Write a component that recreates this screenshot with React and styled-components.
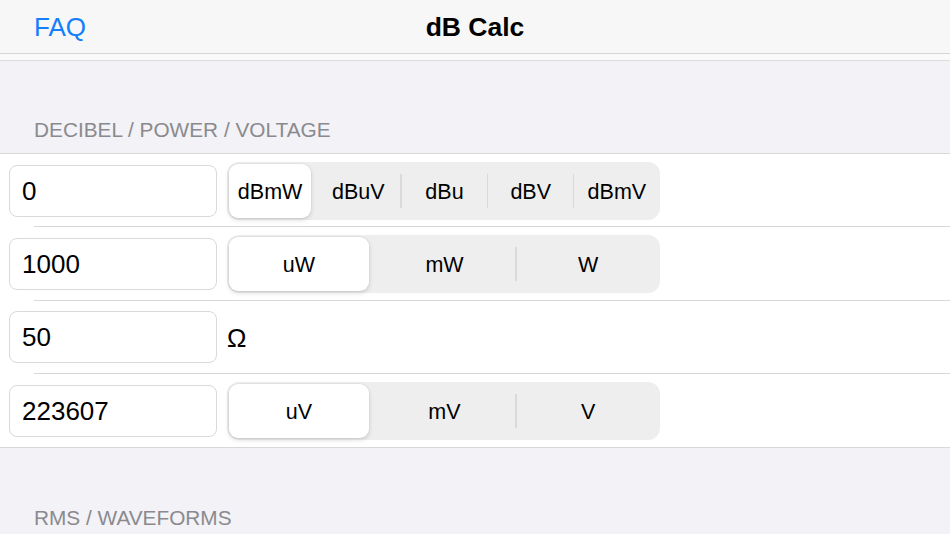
import React, { useState } from "react";
import styled, { createGlobalStyle } from "styled-components";

const Global = createGlobalStyle`
  html, body { margin: 0; padding: 0; background: #f2f2f7; }
  body { font-family: "Liberation Sans", Arial, sans-serif; -webkit-font-smoothing: antialiased; }
  * { box-sizing: border-box; }
`;

const Page = styled.div`
  width: 950px;
  height: 534px;
  overflow: hidden;
  background: #f2f2f7;
`;

const NavBar = styled.header`
  height: 54px;
  background: #f7f7f7;
  border-bottom: 1.5px solid #d5d5d5;
  display: grid;
  grid-template-columns: 1fr auto 1fr;
  align-items: center;
  padding: 0 34px;
`;

const NavLink = styled.span`
  color: #147efb;
  font-size: 26px;
  justify-self: start;
  padding-top: 1px;
`;

const NavTitle = styled.h1`
  margin: 0;
  font-size: 26.5px;
  font-weight: 700;
  color: #000;
  padding-top: 1px;
`;

const NavShade = styled.div`
  height: 7px;
  background: #fafafa;
  border-bottom: 1.5px solid #dcdcdc;
`;

const SectionHeader = styled.div`
  height: ${(p) => p.$h}px;
  display: flex;
  align-items: flex-end;
  padding: 0 34px ${(p) => p.$pb}px;
  color: #8a8a8e;
  font-size: 20.8px;
`;

const Group = styled.div`
  background: #fff;
  border-top: 1px solid #d8d8d8;
  border-bottom: 1px solid #d8d8d8;
`;

const Row = styled.div`
  height: 73.3px;
  display: flex;
  align-items: center;
  gap: 10px;
  padding-left: 9px;
  position: relative;
  & + &::before {
    content: "";
    position: absolute;
    top: -1px;
    left: 34px;
    right: 0;
    height: 1px;
    background: #d8d8d8;
  }
`;

const Field = styled.div`
  width: 208px;
  height: 52px;
  border: 1px solid #d9d9d9;
  border-radius: 8px;
  background: #fff;
  display: flex;
  align-items: center;
  padding: 1px 0 0 12px;
  font-size: 26px;
  color: #000;
`;

const Unit = styled.span`
  font-size: 26px;
  color: #000;
  padding-top: 2px;
`;

const Segmented = styled.div`
  width: 433px;
  height: 58px;
  background: #eeeeef;
  border-radius: 12px;
  padding: 2px 0 2px 2px;
  display: grid;
  grid-template-columns: repeat(${(p) => p.$n}, 1fr);
`;

const Segment = styled.div`
  position: relative;
  display: flex;
  align-items: center;
  justify-content: center;
  padding-top: 3px;
  font-size: 21.5px;
  color: #000;
  margin-right: ${(p) => (p.$active ? "4px" : "0")};
  border-radius: 9px;
  background: ${(p) => (p.$active ? "#fff" : "transparent")};
  box-shadow: ${(p) =>
    p.$active ? "0 2px 5px rgba(0,0,0,0.14), 0 0 0 0.5px rgba(0,0,0,0.06)" : "none"};
  &::before {
    content: "";
    display: ${(p) => (p.$divider ? "block" : "none")};
    position: absolute;
    left: -1px;
    top: 10px;
    bottom: 10px;
    width: 1.5px;
    background: #dadadc;
  }
`;

function SegControl({ items, active }) {
  const [sel, setSel] = useState(active);
  return (
    <Segmented $n={items.length}>
      {items.map((it, i) => (
        <Segment
          key={it}
          $active={i === sel}
          $divider={i > 0 && i !== sel && i - 1 !== sel}
          onClick={() => setSel(i)}
        >
          {it}
        </Segment>
      ))}
    </Segmented>
  );
}

export default function App() {
  return (
    <Page>
      <Global />
      <NavBar>
        <NavLink>FAQ</NavLink>
        <NavTitle>dB Calc</NavTitle>
        <span />
      </NavBar>
      <NavShade />
      <SectionHeader $h={92} $pb={11}>DECIBEL / POWER / VOLTAGE</SectionHeader>
      <Group>
        <Row>
          <Field>0</Field>
          <SegControl items={["dBmW", "dBuV", "dBu", "dBV", "dBmV"]} active={0} />
        </Row>
        <Row>
          <Field>1000</Field>
          <SegControl items={["uW", "mW", "W"]} active={0} />
        </Row>
        <Row>
          <Field>50</Field>
          <Unit>Ω</Unit>
        </Row>
        <Row>
          <Field>223607</Field>
          <SegControl items={["uV", "mV", "V"]} active={0} />
        </Row>
      </Group>
      <SectionHeader $h={89} $pb={7}>RMS / WAVEFORMS</SectionHeader>
    </Page>
  );
}
